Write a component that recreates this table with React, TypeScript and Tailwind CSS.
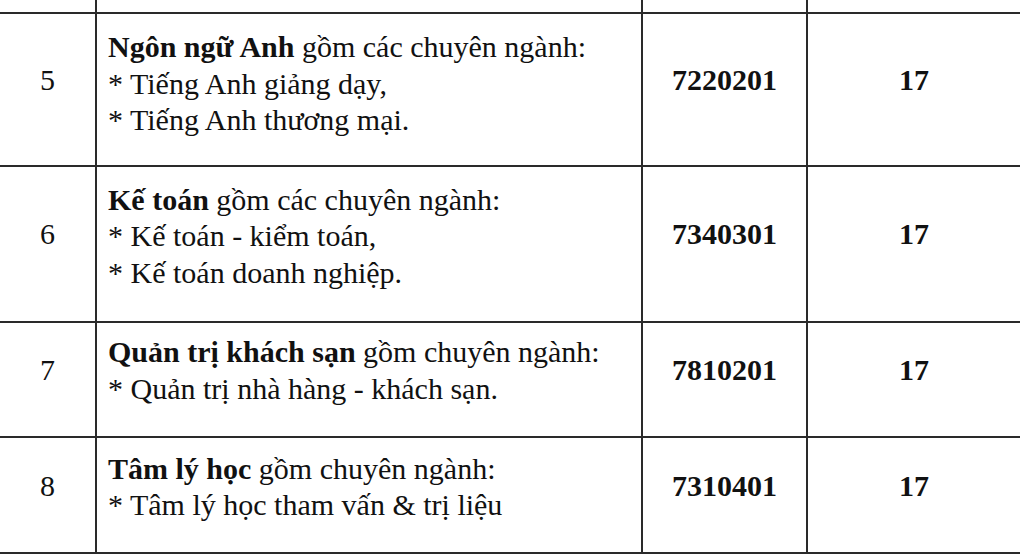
const rows = [
  {
    stt: "5",
    title: "Ngôn ngữ Anh",
    rest: " gồm các chuyên ngành:",
    items: ["* Tiếng Anh giảng dạy,", "* Tiếng Anh thương mại."],
    code: "7220201",
    score: "17",
    h: "h-[153px]",
    pb: "pb-[11px]",
    np: "pb-[19px]",
  },
  {
    stt: "6",
    title: "Kế toán",
    rest: " gồm các chuyên ngành:",
    items: ["* Kế toán - kiểm toán,", "* Kế toán doanh nghiệp."],
    code: "7340301",
    score: "17",
    h: "h-[156px]",
    pb: "pb-[15px]",
    np: "pb-[19px]",
  },
  {
    stt: "7",
    title: "Quản trị khách sạn",
    rest: " gồm chuyên ngành:",
    items: ["* Quản trị nhà hàng - khách sạn."],
    code: "7810201",
    score: "17",
    h: "h-[115px]",
    pb: "pb-[18px]",
    np: "pb-[18px]",
  },
  {
    stt: "8",
    title: "Tâm lý học",
    rest: " gồm chuyên ngành:",
    items: ["* Tâm lý học tham vấn & trị liệu"],
    code: "7310401",
    score: "17",
    h: "h-[116px]",
    pb: "pb-[16px]",
    np: "pb-[18px]",
  },
]

const grid = "grid grid-cols-[95px_546px_165px_1fr] border-b-2 border-[#2a2a2a]"

export default function App() {
  return (
    <div className="w-[1020px] h-[555px] overflow-hidden bg-white text-[#111] font-[family-name:Liberation_Serif,Times_New_Roman,serif] text-[30px] leading-[36.5px]">
      {/* tail of the previous row */}
      <div className={`${grid} h-[14px]`}>
        <div />
        <div className="border-l-2 border-[#2a2a2a]" />
        <div className="border-l-2 border-[#2a2a2a]" />
        <div className="border-l-2 border-[#2a2a2a]" />
      </div>

      {rows.map((r) => (
        <div key={r.stt} className={`${grid} ${r.h}`}>
          <div className={`flex items-center justify-center ${r.np}`}>{r.stt}</div>
          <div className={`border-l-2 border-[#2a2a2a] flex flex-col justify-center pl-[11px] whitespace-nowrap ${r.pb}`}>
            <p>
              <b>{r.title}</b>
              {r.rest}
            </p>
            {r.items.map((it) => (
              <p key={it}>{it}</p>
            ))}
          </div>
          <div className={`border-l-2 border-[#2a2a2a] flex items-center justify-center font-bold ${r.np}`}>
            {r.code}
          </div>
          <div className={`border-l-2 border-[#2a2a2a] flex items-center justify-center font-bold ${r.np}`}>
            {r.score}
          </div>
        </div>
      ))}
    </div>
  )
}
